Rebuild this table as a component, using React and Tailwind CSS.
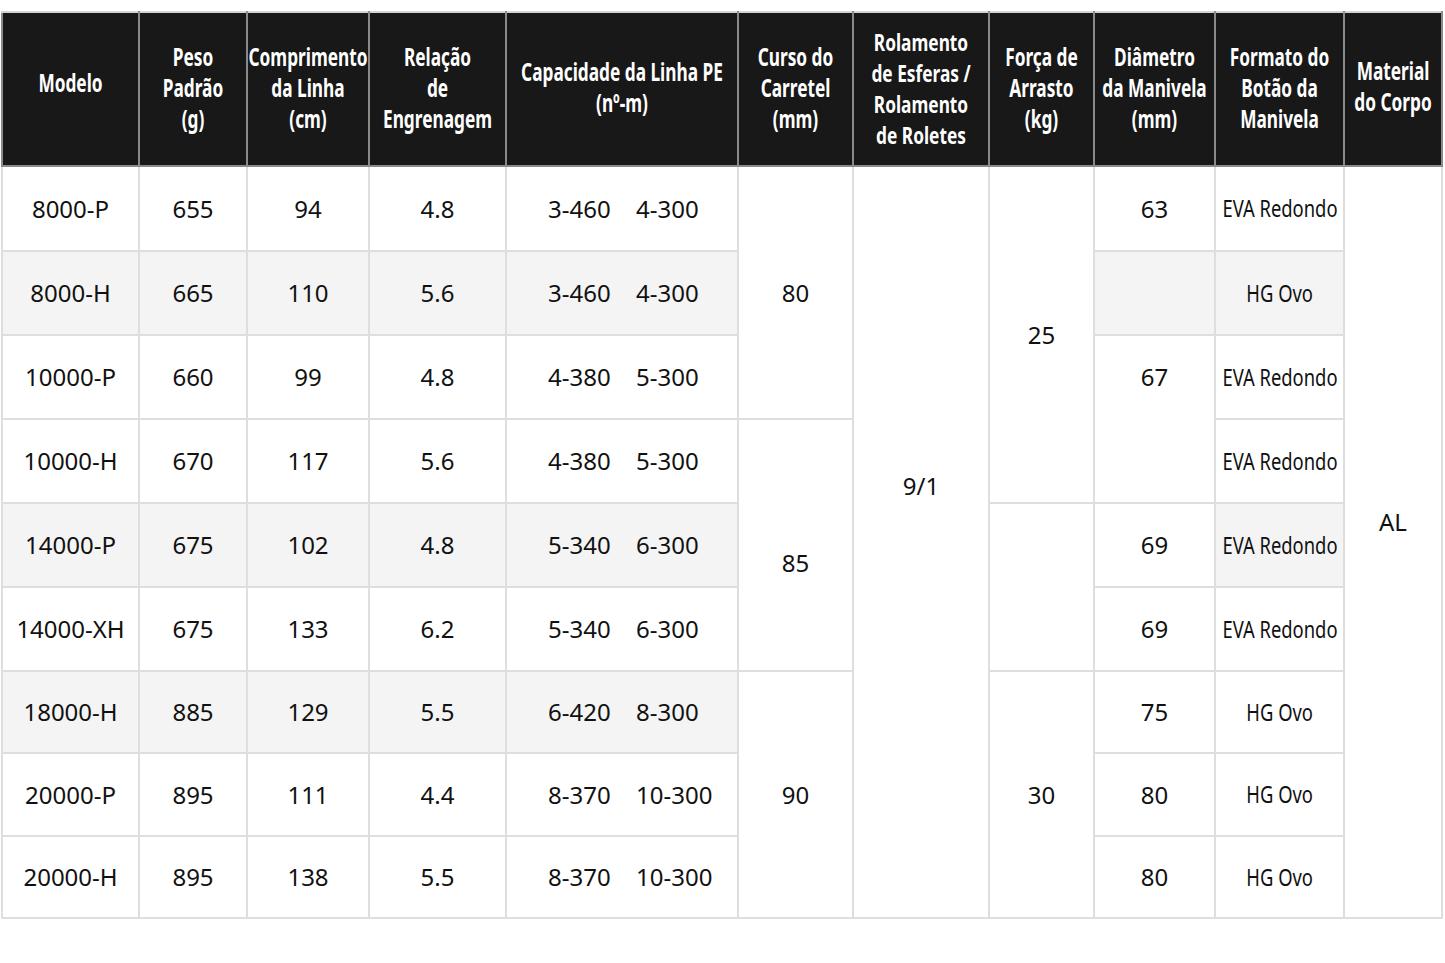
import React from "react";

const B = "font-['Noto_Sans',sans-serif]";

const headers = [
  ["Modelo"],
  ["Peso", "Padrão", "(g)"],
  ["Comprimento", "da Linha", "(cm)"],
  ["Relação", "de", "Engrenagem"],
  ["Capacidade da Linha PE", "(nº-m)"],
  ["Curso do", "Carretel", "(mm)"],
  ["Rolamento", "de Esferas /", "Rolamento", "de Roletes"],
  ["Força de", "Arrasto", "(kg)"],
  ["Diâmetro", "da Manivela", "(mm)"],
  ["Formato do", "Botão da", "Manivela"],
  ["Material", "do Corpo"],
];

const shifts = [
  "-translate-y-[7px]",
  "-translate-y-[2px]",
  "-translate-y-[2px]",
  "-translate-y-[2px]",
  "-translate-y-[2px]",
  "-translate-y-[2px]",
  "-translate-y-[1px] text-[24px] scale-x-[0.72]",
  "-translate-y-[2px]",
  "-translate-y-[2px]",
  "-translate-y-[2px]",
  "-translate-y-[3px]",
];

const widths = [137, 108, 122, 137, 232, 115, 136, 105, 121, 129, 98];
const heights = ["h-[85px]", "h-[84px]", "h-[84px]", "h-[84px]", "h-[84px]", "h-[84px]", "h-[82px]", "h-[83px]", "h-[82px]"];

const base = [
  ["8000-P", "655", "94", "4.8", "3-460", "4-300"],
  ["8000-H", "665", "110", "5.6", "3-460", "4-300"],
  ["10000-P", "660", "99", "4.8", "4-380", "5-300"],
  ["10000-H", "670", "117", "5.6", "4-380", "5-300"],
  ["14000-P", "675", "102", "4.8", "5-340", "6-300"],
  ["14000-XH", "675", "133", "6.2", "5-340", "6-300"],
  ["18000-H", "885", "129", "5.5", "6-420", "8-300"],
  ["20000-P", "895", "111", "4.4", "8-370", "10-300"],
  ["20000-H", "895", "138", "5.5", "8-370", "10-300"],
];
const grayRows = [1, 4, 6];

const td = "border-2 border-[#dedede] text-center align-middle text-[#111] p-0";

export default function App() {
  return (
    <div className="w-[1445px] h-[963px] bg-white pt-[11px] pl-[1px]">
      <table className="border-collapse table-fixed w-[1442px]">
        <colgroup>
          {widths.map((w, i) => (
            <col key={i} style={{ width: w }} />
          ))}
        </colgroup>
        <thead>
          <tr className="h-[154px] bg-[#181818]">
            {headers.map((lines, i) => (
              <th
                key={i}
                className={`${B} border-2 border-[#8a8a8a] border-t-[#d4d4d4] text-white text-[25px] leading-[31px] font-bold align-middle p-0`}
              >
                <div className={`flex flex-col items-center ${i === 6 ? "" : "scale-x-[0.69]"} ${shifts[i]}`}>
                  {lines.map((l, j) => (
                    <div key={j} className="whitespace-nowrap">{l}</div>
                  ))}
                </div>
              </th>
            ))}
          </tr>
        </thead>
        <tbody>
          {base.map((r, ri) => {
            const gray = grayRows.includes(ri) ? "bg-[#f4f4f4]" : "bg-white";
            return (
              <tr key={ri} className={heights[ri]}>
                <td className={`${td} ${gray} ${B} text-[24px]`}>{r[0]}</td>
                <td className={`${td} ${gray} ${B} text-[24px]`}>{r[1]}</td>
                <td className={`${td} ${gray} ${B} text-[24px]`}>{r[2]}</td>
                <td className={`${td} ${gray} ${B} text-[24px]`}>{r[3]}</td>
                <td className={`${td} ${gray} ${B} text-[24px] text-left pl-[41px]`}>
                  <span className="inline-block w-[88px]">{r[4]}</span>
                  <span>{r[5]}</span>
                </td>
                {ri === 0 && (
                  <td rowSpan={3} className={`${td} bg-white ${B} text-[24px]`}>80</td>
                )}
                {ri === 3 && (
                  <td rowSpan={3} className={`${td} bg-white ${B} text-[24px] pt-[36px]`}>85</td>
                )}
                {ri === 6 && (
                  <td rowSpan={3} className={`${td} bg-white ${B} text-[24px]`}>90</td>
                )}
                {ri === 0 && (
                  <td rowSpan={9} className={`${td} bg-white ${B} text-[24px] pb-[112px]`}>9/1</td>
                )}
                {ri === 0 && (
                  <td rowSpan={4} className={`${td} bg-white ${B} text-[24px]`}>25</td>
                )}
                {ri === 4 && <td rowSpan={2} className={`${td} bg-white`}></td>}
                {ri === 6 && (
                  <td rowSpan={3} className={`${td} bg-white ${B} text-[24px]`}>30</td>
                )}
                {ri === 0 && <td className={`${td} bg-white ${B} text-[24px]`}>63</td>}
                {ri === 1 && <td className={`${td} bg-[#f4f4f4]`}></td>}
                {ri === 2 && (
                  <td rowSpan={2} className={`${td} bg-white ${B} text-[24px] pb-[84px]`}>67</td>
                )}
                {ri === 4 && <td className={`${td} bg-white ${B} text-[24px]`}>69</td>}
                {ri === 5 && <td className={`${td} bg-white ${B} text-[24px]`}>69</td>}
                {ri === 6 && <td className={`${td} bg-white ${B} text-[24px]`}>75</td>}
                {ri === 7 && <td className={`${td} bg-white ${B} text-[24px]`}>80</td>}
                {ri === 8 && <td className={`${td} bg-white ${B} text-[24px]`}>80</td>}
                <td
                  className={`${td} ${ri === 1 || ri === 4 ? "bg-[#f4f4f4]" : "bg-white"} ${B} text-[23px]`}
                >
                  <div className="flex justify-center">
                    <span className="whitespace-nowrap scale-x-[0.8] inline-block">
                      {[0, 2, 3, 4, 5].includes(ri) ? "EVA Redondo" : "HG Ovo"}
                    </span>
                  </div>
                </td>
                {ri === 0 && (
                  <td rowSpan={9} className={`${td} bg-white ${B} text-[24px] pb-[40px]`}>AL</td>
                )}
              </tr>
            );
          })}
        </tbody>
      </table>
    </div>
  );
}
